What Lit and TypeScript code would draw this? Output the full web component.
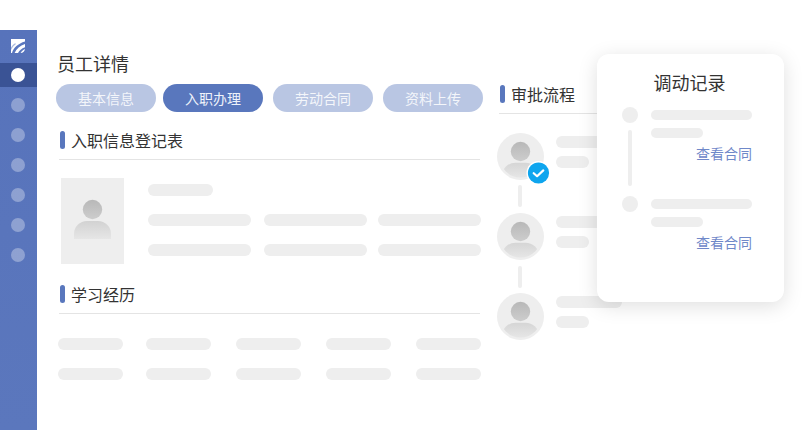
import { LitElement, html, css } from "lit";
import { customElement } from "lit/decorators.js";

let uid = 0;
const personAvatar = () => {
  const id = `a${uid++}`;
  return html`<svg class="avatar" viewBox="0 0 47 47" width="47" height="47">
    <defs>
      <linearGradient id="${id}h" x1="0" y1="0" x2="0" y2="1"><stop offset="0" stop-color="#b8b8b8"/><stop offset="1" stop-color="#cdcdcd"/></linearGradient>
      <linearGradient id="${id}b" x1="0" y1="0" x2="0" y2="1"><stop offset="0" stop-color="#d5d5d5"/><stop offset="0.65" stop-color="#e7e7e7"/></linearGradient>
      <clipPath id="${id}c"><circle cx="23.5" cy="23.5" r="21"/></clipPath>
    </defs>
    <circle cx="23.5" cy="23.5" r="23.5" fill="#eeeeee"/>
    <circle cx="23.5" cy="18.5" r="9.7" fill="url(#${id}h)"/>
    <g clip-path="url(#${id}c)"><rect x="5.5" y="29.7" width="36" height="24" rx="13" fill="url(#${id}b)"/></g>
  </svg>`;
};

@customElement("app-root")
export class AppRoot extends LitElement {
  static styles = css`
    :host { display: block; width: 802px; height: 441px; background: #fff; overflow: hidden; position: relative;
      font-family: "Noto Sans CJK SC", "Noto Sans", sans-serif; color: #333; }
    .page { display: flex; padding-top: 30px; height: 400px; }
    .side { width: 37px; height: 400px; background: linear-gradient(180deg, #5773bb, #5b77bd); display: flex; flex-direction: column; flex: none; }
    .logo { height: 24px; padding-top: 9px; display: flex; align-items: flex-start; justify-content: center; width: 36px; }
    .logo svg { display: block; }
    .nav { width: 36px; padding-right: 1px; height: 30px; display: flex; align-items: center; justify-content: center; }
    .nav.on { height: 24px; background: #3a5395; margin-bottom: 3px; }
    .nav i { width: 14px; height: 14px; border-radius: 50%; background: rgba(255,255,255,.32); display: block; }
    .nav.on i { background: #fff; }
    .left { width: 427px; margin-left: 19px; padding-top: 19px; flex: none; }
    .title { font-size: 18px; line-height: 28px; margin-left: 1px; color: #333; }
    .tabs { display: flex; margin-top: 7px; }
    .tab { width: 100px; height: 28px; flex: none; border-radius: 14px; background: #b9c6e3; color: rgba(255,255,255,.85); font-size: 14px; line-height: 28px; text-align: center; margin-right: 10px; }
    .tab.first { margin-right: 7px; }
    .tab.on { background: #5977bd; color: #eef2fa; }
    .head { display: flex; align-items: center; height: 18px; padding-bottom: 10px; border-bottom: 1px solid #e4e4e4; margin-left: 3px; gap: 6px; font-size: 16px; color: #333; }
    .head b { display: block; width: 5px; height: 18px; border-radius: 2.5px; background: #5977bd; margin-left: 1px; }
    .left > .head { width: 421px; margin-top: 19px; }
    .info { display: flex; margin-top: 18px; margin-left: 5px; }
    .photo { width: 63px; height: 86px; background: #eeeeee; flex: none; display: flex; justify-content: center; }
    .fields { display: grid; grid-template-columns: 116px 114px 103px; row-gap: 18px; margin-left: 24px; margin-top: 6px; align-content: start; }
    .bar { display: block; height: 12px; border-radius: 6px; background: #eeeeee; }
    .w103 { width: 103px; }
    .w66 { width: 66px; }
    .w65 { width: 65px; }
    .w33 { width: 33px; }
    .full { grid-column: 1 / -1; }
    .left > .head.edu { margin-top: 21px; }
    .edu-grid { display: grid; grid-template-columns: 88px 90px 90px 90px 65px; row-gap: 18px; margin: 24px 0 0 2px; }
    .right { margin-left: 14px; padding-top: 55px; flex: none; width: 140px; }
    .right .head { margin-left: 2px; }
    .steps { margin-top: 19px; display: flex; flex-direction: column; }
    .step { display: flex; position: relative; height: 47px; }
    .step .lines { margin: 3px 0 0 12px; display: flex; flex-direction: column; gap: 8px; }
    .avatar { display: block; flex: none; }
    .conn { width: 4px; height: 22px; border-radius: 2px; background: #eeeeee; margin: 5px 0 6px 21px; }
    .conn.b { margin: 6px 0 5px 21px; }
    .check { position: absolute; left: 29px; top: 28px; }
    .card { position: absolute; left: 597px; top: 54px; width: 187px; height: 248px; border-radius: 12px; background: #fff; box-shadow: 0 4px 20px rgba(0,0,0,.13); box-sizing: border-box; padding: 0 32px 0 25px; }
    .card h3 { margin: 0 -5px 0 0; padding-top: 14px; font-size: 18px; font-weight: 400; line-height: 28px; text-align: center; color: #333; }
    .rec { display: flex; }
    .rec-a { margin-top: 11px; height: 79px; }
    .rec-b { margin-top: 10px; }
    .rail { width: 16px; flex: none; display: flex; flex-direction: column; align-items: center; }
    .rail .dot { width: 16px; height: 16px; border-radius: 50%; background: #eeeeee; }
    .rail .line { width: 4px; height: 56px; margin-top: 7px; border-radius: 2px; background: #eeeeee; }
    .rec-body { margin-left: 13px; padding-top: 3px; width: 101px; }
    .rec-body .bar { height: 10px; border-radius: 5px; }
    .rec-body .w52 { width: 52px; margin-top: 8px; }
    .link { text-align: right; font-size: 14px; line-height: 20px; margin-top: 5px; color: #6f88c9; }
  `;

  render() {
    const fieldRow = html`<span class="bar w103"></span><span class="bar w103"></span><span class="bar w103"></span>`;
    const eduRow = html`${[0, 1, 2, 3, 4].map(() => html`<span class="bar w65"></span>`)}`;
    const lines = html`<div class="lines"><span class="bar w66"></span><span class="bar w33"></span></div>`;
    return html`
      <div class="page">
        <aside class="side">
          <div class="logo">
            <svg width="14" height="14" viewBox="0 0 14 14">
              <path d="M0 0H14V9.5C14 12 12 14 9.5 14H0Z" fill="#fff"/>
              <path d="M1 14C2.5 9 7 4.5 14 2.6V5C9 6.5 5.5 9.5 3.6 14Z" fill="#5a77bf"/>
              <path d="M7 14C8.2 11.5 10.6 9.4 14 8.2V10C12 11 10.6 12.4 9.6 14Z" fill="#5a77bf"/>
              <path d="M0 8.5C1 6.5 2.5 5.2 4.2 4.2L5 5C3 6.4 1.2 8.4 0 11Z" fill="#a9b9de"/>
            </svg>
          </div>
          <div class="nav on"><i></i></div>
          ${[0, 1, 2, 3, 4, 5].map(() => html`<div class="nav"><i></i></div>`)}
        </aside>
        <div class="left">
          <div class="title">员工详情</div>
          <div class="tabs">
            <div class="tab first">基本信息</div>
            <div class="tab on">入职办理</div>
            <div class="tab">劳动合同</div>
            <div class="tab">资料上传</div>
          </div>
          <div class="head"><b></b>入职信息登记表</div>
          <div class="info">
            <div class="photo">
              <svg width="63" height="86" viewBox="0 0 63 86">
                <defs>
                  <linearGradient id="ph" x1="0" y1="0" x2="0" y2="1"><stop offset="0" stop-color="#b8b8b8"/><stop offset="1" stop-color="#cdcdcd"/></linearGradient>
                  <linearGradient id="pb" x1="0" y1="0" x2="0" y2="1"><stop offset="0" stop-color="#d2d2d2"/><stop offset="1" stop-color="#e6e6e6"/></linearGradient>
                </defs>
                <circle cx="31.5" cy="31.5" r="9.7" fill="url(#ph)"/>
                <path d="M13 61V56A13 13 0 0 1 26 43H37A13 13 0 0 1 50 56V61Z" fill="url(#pb)"/>
              </svg>
            </div>
            <div class="fields">
              <span class="bar w65 full"></span>
              ${fieldRow}${fieldRow}
            </div>
          </div>
          <div class="head edu"><b></b>学习经历</div>
          <div class="edu-grid">${eduRow}${eduRow}</div>
        </div>
        <div class="right">
          <div class="head"><b></b>审批流程</div>
          <div class="steps">
            <div class="step">
              ${personAvatar()}
              <svg class="check" width="25" height="24" viewBox="0 0 25 24">
                <circle cx="12.5" cy="12" r="12" fill="#fff"/>
                <circle cx="12.5" cy="12" r="10.6" fill="#0ea5ee"/>
                <path d="M7.7 12.2L11.1 15.2L17.3 9.4" fill="none" stroke="#fff" stroke-width="2.2" stroke-linecap="round" stroke-linejoin="round"/>
              </svg>
              ${lines}
            </div>
            <div class="conn"></div>
            <div class="step">${personAvatar()}${lines}</div>
            <div class="conn b"></div>
            <div class="step">${personAvatar()}${lines}</div>
          </div>
        </div>
      </div>
      <section class="card">
        <h3>调动记录</h3>
        <div class="rec rec-a">
          <div class="rail"><div class="dot"></div><div class="line"></div></div>
          <div class="rec-body"><span class="bar"></span><span class="bar w52"></span><div class="link">查看合同</div></div>
        </div>
        <div class="rec rec-b">
          <div class="rail"><div class="dot"></div></div>
          <div class="rec-body"><span class="bar"></span><span class="bar w52"></span><div class="link">查看合同</div></div>
        </div>
      </section>
    `;
  }
}
